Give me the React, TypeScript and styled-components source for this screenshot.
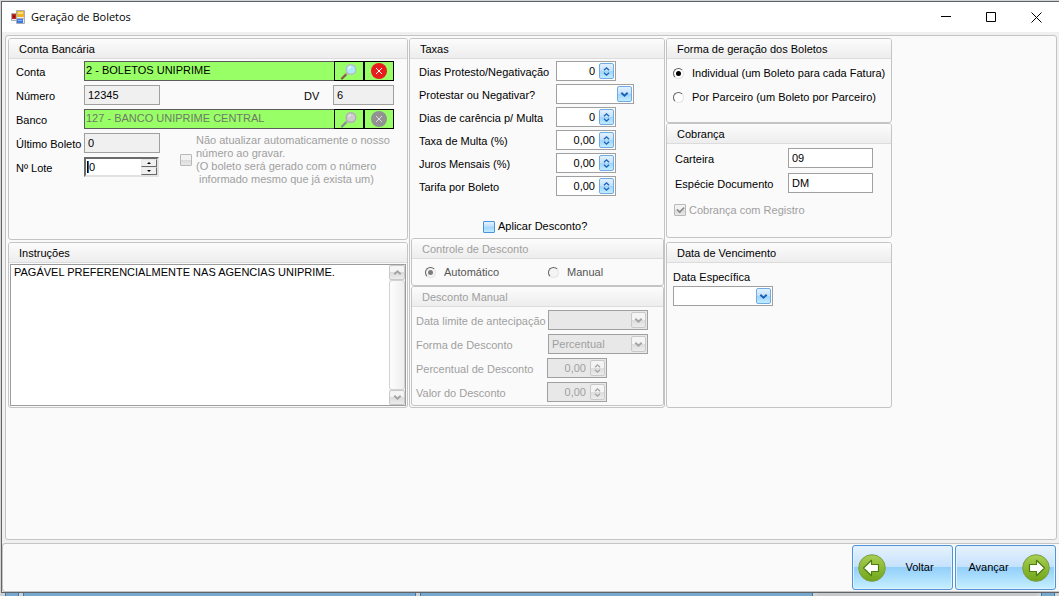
import React, { useId } from 'react';
import styled, { createGlobalStyle, css } from 'styled-components';

const line = '#c4c4c4';
const ink = '#000';
const faded = '#a0a0a0';
const green = '#99ff66';

const GlobalStyle = createGlobalStyle`
  * { box-sizing: border-box; }
  body {
    margin: 0;
    background: #d4d4d4;
    color: ${ink};
    font: 11px/13px "Liberation Sans", Arial, sans-serif;
  }
  button, input, select, textarea { font: inherit; color: inherit; margin: 0; }
`;

/* ---------- window frame ---------- */

const Desktop = styled.div`
  display: flex;
  flex-direction: column;
  min-height: 100vh;
  padding: 1px 0 0 1px;
`;

const Window = styled.div`
  flex: 1;
  display: flex;
  flex-direction: column;
  background: #f0f0f0;
  border: solid #5f6468;
  border-width: 1px 0 1px 1px;
`;

const TitleBar = styled.header`
  display: flex;
  align-items: center;
  height: 30px;
  padding-left: 9px;
  background: #fff;
`;

const Title = styled.h1`
  flex: 1;
  margin: 0 0 0 6px;
  font: 11px/16px "Open Sans", sans-serif;
`;

const CaptionButton = styled.button`
  display: grid;
  place-items: center;
  width: 45px;
  height: 28px;
  padding: 0;
  border: 0;
  background: none;
`;

const Panel = styled.main`
  flex: 1;
  margin: 3px 2px 3px 3px;
  padding: 2px;
  border: 1px solid ${line};
  border-radius: 3px;
  background: #fafafa;
`;

const Footer = styled.footer`
  display: flex;
  justify-content: flex-end;
  gap: 2px;
  padding: 1px 3px;
  border: 1px solid ${line};
  border-right: 0;
  border-radius: 3px 0 0 3px;
  background: #fafafa;
`;

const TaskStrip = styled.div`
  display: flex;
  gap: 4px;
  height: 3px;
  padding-left: 4px;
  background: #d0d0d0;
`;

const StripPart = styled.span<{ $width: number; $empty?: boolean }>`
  flex: 0 0 ${p => p.$width}px;
  background: ${p => (p.$empty ? '#c8c8c8' : '#78a9cc')};
  border: solid #3d78b0;
  border-width: ${p => (p.$empty ? '0' : '0 1px')};
`;

/* ---------- groups ---------- */

const Board = styled.div`
  display: grid;
  grid-template-columns: 400px 256px 226px;
  grid-template-rows: minmax(202px, auto) minmax(166px, auto);
  gap: 2px 1px;
`;

const Group = styled.section<{ $tall?: boolean; $faded?: boolean }>`
  display: flex;
  flex-direction: column;
  min-width: 0;
  border: 1px solid ${line};
  border-radius: 3px;
  color: ${p => (p.$faded ? faded : ink)};
  ${p => p.$tall && css`grid-row: span 2;`}
`;

const GroupTitle = styled.h2`
  flex: none;
  height: 20px;
  margin: 0;
  padding: 0 10px;
  border-bottom: 1px solid #dcdcdc;
  border-radius: 2px 2px 0 0;
  background: linear-gradient(#fcfcfc, #ededed);
  font: inherit;
  line-height: 20px;
`;

const Stack = styled.div`
  display: flex;
  flex-direction: column;
`;

const Rows = styled.div<{ $gap: number; $pad?: string }>`
  display: flex;
  flex-direction: column;
  gap: ${p => p.$gap}px;
  padding: ${p => p.$pad ?? '0'};
`;

const Row = styled.div`
  display: flex;
  align-items: center;
  height: 20px;
`;

const DigitRow = styled(Row)`
  margin-left: 144px;
`;

const Label = styled.label<{ $width: number }>`
  flex: 0 0 ${p => p.$width}px;
  padding-top: 2px;
  white-space: nowrap;
`;

/* ---------- fields ---------- */

const fieldBox = css`
  height: 20px;
  border: 1px solid #a0a0a0;
  border-radius: 0;
  background: #fff;
  outline: 0;
`;

const TextField = styled.input<{ $width: number }>`
  ${fieldBox}
  width: ${p => p.$width}px;
  padding: 0 3px;
  &:read-only { background: #f0f0f0; }
`;

const LookupBox = styled.div`
  display: flex;
  width: 310px;
  height: 20px;
`;

const LookupText = styled.input`
  flex: 1;
  min-width: 0;
  padding: 0 1px 2px;
  border: 1px solid #5c5c5c;
  border-right: 0;
  border-radius: 0;
  background: ${green};
  &:disabled { color: #6d7a68; }
`;

const LookupButton = styled.button`
  display: grid;
  place-items: center;
  width: 30px;
  padding: 0;
  border: 1px solid #000;
  background: ${green};
`;

const SpinBox = styled.div<{ $faded?: boolean }>`
  ${fieldBox}
  display: flex;
  width: 60px;
  padding: 1px;
  background: ${p => (p.$faded ? '#e8e8e8' : '#fff')};
`;

const SpinInput = styled.input`
  flex: 1;
  min-width: 0;
  padding: 0 4px 0 0;
  border: 0;
  background: none;
  text-align: right;
  outline: 0;
  &:disabled { color: ${faded}; }
`;

const buttonSkin = css<{ $faded?: boolean }>`
  display: grid;
  place-items: center;
  width: 15px;
  padding: 0;
  border: 1px solid ${p => (p.$faded ? '#c9c9c9' : '#6fabe4')};
  border-radius: 2px;
  background: ${p =>
    p.$faded
      ? 'linear-gradient(#f4f4f4 0 50%, #dcdcdc 50%, #ececec)'
      : 'linear-gradient(#e3f1fe, #c3e0fb 50%, #9ed3fb 50%, #c2ebff)'};
  color: ${p => (p.$faded ? '#a4a4a4' : '#1a62b8')};
`;

const StepButton = styled.button<{ $faded?: boolean }>`${buttonSkin}`;

const ComboBox = styled.div<{ $width: number }>`
  position: relative;
  display: flex;
  width: ${p => p.$width}px;
  height: 20px;
`;

const ComboSelect = styled.select`
  ${fieldBox}
  width: 100%;
  padding: 0 18px 0 3px;
  appearance: none;
  &:disabled { background: #e8e8e8; color: ${faded}; opacity: 1; }
`;

const ComboArrow = styled.span<{ $faded?: boolean }>`
  ${buttonSkin}
  position: absolute;
  inset: 2px 2px 2px auto;
  pointer-events: none;
`;

const LotBox = styled.div`
  display: flex;
  width: 75px;
  height: 20px;
  border: 2px solid;
  border-color: #6b6b6b #e2e2e2 #e2e2e2 #6b6b6b;
  background: #fff;
`;

const Caret = styled.span`
  width: 2px;
  margin: 2px 0 2px 1px;
  border-left: 1px solid #000;
  background: #1464c8;
`;

const LotInput = styled.input`
  flex: 1;
  min-width: 0;
  padding: 0;
  border: 0;
  outline: 0;
`;

const LotSteps = styled.div`
  display: grid;
  grid-template-rows: 1fr 1fr;
  width: 16px;
`;

const LotStep = styled.button`
  display: grid;
  place-items: center;
  padding: 0;
  border: 1px solid;
  border-color: #e8e8e8 #696969 #696969 #e8e8e8;
  background: #f0f0f0;
`;

/* ---------- ticks and radios ---------- */

const Choice = styled.label<{ $gap: number; $faded?: boolean }>`
  display: flex;
  align-items: center;
  gap: ${p => p.$gap}px;
  color: ${p => (p.$faded ? faded : 'inherit')};
  white-space: pre;
`;

const Tick = styled.input.attrs({ type: 'checkbox' })`
  flex: none;
  appearance: none;
  display: grid;
  place-items: center;
  width: 12px;
  height: 12px;
  border: 1px solid #4a94dc;
  border-radius: 1px;
  background: linear-gradient(#e4f2fe, #b8dcfb 50%, #9fd4fb 50%, #c4ecff);
  &:disabled {
    border-color: #b8b8b8;
    background: linear-gradient(#f2f2f2 0 50%, #dadada 50%, #e8e8e8);
  }
  &:checked::after {
    content: '';
    width: 7px;
    height: 4px;
    margin-bottom: 2px;
    border: solid #8c8c8c;
    border-width: 0 0 2px 2px;
    transform: rotate(-45deg) scale(0.8);
  }
`;

const Radio = styled.input.attrs({ type: 'radio' })`
  flex: none;
  appearance: none;
  display: grid;
  place-items: center;
  width: 11px;
  height: 11px;
  border: 1px solid;
  border-color: #606060 #e4e4e4 #e4e4e4 #606060;
  border-radius: 50%;
  background: #fff;
  &:checked::after {
    content: '';
    width: 5px;
    height: 5px;
    border-radius: 50%;
    background: #000;
  }
  &:disabled { background: #f4f4f4; }
  &:disabled::after { background: #7d7d7d; }
`;

const LotLine = styled.div`
  display: flex;
  gap: 20px;
  height: 54px;
`;

const RadioLine = styled.div`
  display: grid;
  grid-template-columns: 123px 1fr;
  padding: 0 13px;
  height: 26px;
  color: #555;
`;

const Discount = styled.div`
  display: flex;
  flex: 1;
  flex-direction: column;
  padding: 24px 0 1px 1px;
`;

const DiscountToggle = styled.div`
  padding: 0 0 5px 72px;
`;

/* ---------- instructions ---------- */

const NoteBox = styled.div`
  display: flex;
  flex: 1;
  margin: 1px;
  border: 1px solid #9c9c9c;
  background: #fff;
`;

const NoteText = styled.textarea`
  flex: 1;
  padding: 1px 3px;
  border: 0;
  resize: none;
  outline: 0;
  background: none;
  overflow: hidden;
`;

const ScrollBar = styled.div`
  display: grid;
  grid-template-rows: 15px 1fr 15px;
  width: 16px;
  background: #f2f2f2;
`;

const ScrollThumb = styled.div`
  border: 1px solid #d2d2d2;
  border-radius: 3px;
  background: linear-gradient(90deg, #fdfdfd, #efefef);
`;

const ScrollButton = styled.button<{ $faded?: boolean }>`
  ${buttonSkin}
  width: 16px;
`;

/* ---------- wizard buttons ---------- */

const WizardButton = styled.button`
  display: flex;
  align-items: center;
  gap: 6px;
  width: 101px;
  height: 45px;
  padding: 0 5px;
  border: 1px solid #4f93d8;
  border-radius: 3px;
  box-shadow: inset 0 0 0 1px #e0f0fe;
  background: linear-gradient(#e6f2fe, #c4e1fc 50%, #92cffa 50%, #c6efff);
`;

const WizardText = styled.span`
  flex: 1;
  text-align: center;
`;

/* ---------- drawings ---------- */

const AppIcon = () => (
  <svg width="14" height="14" viewBox="0 0 14 14" aria-hidden="true">
    <path d="M.5 3.500h5v7h-5zM5.500.5h8v8h-8zM5.500 8.500h8v5h-8z" fill="#e9e9ee" stroke="#a9acb6" />
    <path d="M1 4h4v5H1z" fill="#c5281c" />
    <path d="M2 5.500h2v2H2z" fill="#7c0f0a" />
    <path d="M6 1h7v6H6z" fill="#f0b429" />
    <path d="M7 2h5v2H7z" fill="#ffe07a" />
    <path d="M6 9h6v4H6z" fill="#3c78e0" />
    <path d="M7 10h4v1H7z" fill="#86b4ff" />
  </svg>
);

const Magnifier = ({ gray }: { gray?: boolean }) => (
  <svg width="18" height="17" viewBox="0 0 18 17" aria-hidden="true">
    <path d="M2 15.500l4-4" stroke={gray ? '#8c8c8c' : '#8a5a52'} strokeWidth="2.400" strokeLinecap="round" />
    <path d="M6 11.500l2-2" stroke={gray ? '#a8a8a8' : '#b9a58c'} strokeWidth="1.800" />
    <circle cx="11" cy="6.500" r="4.800" fill={gray ? '#cdcdcd' : '#aeeafc'} stroke={gray ? '#b0b0b0' : '#b4bfc6'} strokeWidth="1.500" />
    <path d="M8.500 6a3 3 0 0 1 2.500-2.500" fill="none" stroke={gray ? '#e4e4e4' : '#effcff'} strokeWidth="1.500" />
  </svg>
);

const ClearMark = ({ gray }: { gray?: boolean }) => (
  <svg width="16" height="16" viewBox="0 0 16 16" aria-hidden="true">
    <circle cx="8" cy="8" r="8" fill={gray ? '#929292' : '#e81c1c'} />
    <path d="M5 5l6 6M11 5l-6 6" stroke={gray ? '#dcdcdc' : '#fff'} strokeWidth="1" />
  </svg>
);

const UpDown = () => (
  <svg width="9" height="11" viewBox="0 0 9 11" fill="none" stroke="currentColor" strokeWidth="1.300" aria-hidden="true">
    <path d="M2 4.300l2.500-2.500L7 4.300M2 6.700l2.500 2.500L7 6.700" />
  </svg>
);

const Chevron = ({ up }: { up?: boolean }) => (
  <svg width="9" height="7" viewBox="0 0 9 7" fill="none" stroke="currentColor" strokeWidth="2" aria-hidden="true">
    <path d={up ? 'M1.300 5.300l3.200-3 3.200 3' : 'M1.300 1.700l3.200 3 3.200-3'} />
  </svg>
);

const SmallArrow = ({ up }: { up?: boolean }) => (
  <svg width="4" height="2" viewBox="0 0 4 2" aria-hidden="true">
    <path d={up ? 'M0 2L2 0l2 2z' : 'M0 0l2 2 2-2z'} />
  </svg>
);

const ArrowBadge = ({ right }: { right?: boolean }) => {
  const id = useId();
  return (
    <svg width="28" height="28" viewBox="0 0 28 28" aria-hidden="true">
      <defs>
        <linearGradient id={id} x1="0" y1="0" x2="0" y2="1">
          <stop offset="0" stopColor="#a9cf52" />
          <stop offset="1" stopColor="#6fa519" />
        </linearGradient>
      </defs>
      <circle cx="14" cy="14" r="13.300" fill={`url(#${id})`} stroke="#7f9c46" strokeWidth="1" />
      <path
        d={right
          ? 'M22.500 14L14.500 6.300v4.200H7.500v7h7v4.200z'
          : 'M5.500 14l8-7.700v4.200h7v7h-7v4.200z'}
        fill="#fff"
        stroke="#4d7c10"
        strokeWidth="1.200"
        strokeLinejoin="round"
      />
    </svg>
  );
};

/* ---------- composed controls ---------- */

const Lookup = ({ id, value, disabled }: { id: string; value: string; disabled?: boolean }) => (
  <LookupBox>
    <LookupText id={id} defaultValue={value} disabled={disabled} />
    <LookupButton type="button" aria-label="Pesquisar" disabled={disabled}><Magnifier gray={disabled} /></LookupButton>
    <LookupButton type="button" aria-label="Limpar" disabled={disabled}><ClearMark gray={disabled} /></LookupButton>
  </LookupBox>
);

const Spin = ({ label, width, value, disabled }: { label: string; width: number; value: string; disabled?: boolean }) => {
  const id = useId();
  return (
    <Row>
      <Label htmlFor={id} $width={width}>{label}</Label>
      <SpinBox $faded={disabled}>
        <SpinInput id={id} defaultValue={value} disabled={disabled} />
        <StepButton type="button" aria-label="Ajustar" disabled={disabled} $faded={disabled}><UpDown /></StepButton>
      </SpinBox>
    </Row>
  );
};

const Combo = ({ id, width, value = '', disabled }: { id: string; width: number; value?: string; disabled?: boolean }) => (
  <ComboBox $width={width}>
    <ComboSelect id={id} defaultValue={value} disabled={disabled}><option>{value}</option></ComboSelect>
    <ComboArrow $faded={disabled}><Chevron /></ComboArrow>
  </ComboBox>
);

export default function App() {
  return (
    <Desktop>
      <GlobalStyle />
      <Window>
        <TitleBar>
          <AppIcon />
          <Title>Geração de Boletos</Title>
          <CaptionButton type="button" aria-label="Minimizar">
            <svg width="11" height="11"><path d="M0 4.500h10" stroke="#000" /></svg>
          </CaptionButton>
          <CaptionButton type="button" aria-label="Maximizar">
            <svg width="11" height="11"><path d="M.5.5h9v9h-9z" fill="none" stroke="#000" /></svg>
          </CaptionButton>
          <CaptionButton type="button" aria-label="Fechar">
            <svg width="11" height="11"><path d="M.5.5l10 10M10.500.5l-10 10" stroke="#000" /></svg>
          </CaptionButton>
        </TitleBar>

        <Panel>
          <Board>
            <Group>
              <GroupTitle>Conta Bancária</GroupTitle>
              <Rows $gap={4} $pad="2px 7px">
                <Row>
                  <Label htmlFor="conta" $width={68}>Conta</Label>
                  <Lookup id="conta" value="2 - BOLETOS UNIPRIME" />
                </Row>
                <Row>
                  <Label htmlFor="numero" $width={68}>Número</Label>
                  <TextField id="numero" $width={76} defaultValue="12345" readOnly />
                  <DigitRow>
                    <Label htmlFor="dv" $width={29}>DV</Label>
                    <TextField id="dv" $width={61} defaultValue="6" readOnly />
                  </DigitRow>
                </Row>
                <Row>
                  <Label htmlFor="banco" $width={68}>Banco</Label>
                  <Lookup id="banco" value="127 - BANCO UNIPRIME CENTRAL" disabled />
                </Row>
                <LotLine>
                  <Rows $gap={4}>
                    <Row>
                      <Label htmlFor="ultimo" $width={68}>Último Boleto</Label>
                      <TextField id="ultimo" $width={76} defaultValue="0" readOnly />
                    </Row>
                    <Row>
                      <Label htmlFor="lote" $width={68}>Nº Lote</Label>
                      <LotBox>
                        <Caret />
                        <LotInput id="lote" defaultValue="0" />
                        <LotSteps>
                          <LotStep type="button" aria-label="Aumentar"><SmallArrow up /></LotStep>
                          <LotStep type="button" aria-label="Diminuir"><SmallArrow /></LotStep>
                        </LotSteps>
                      </LotBox>
                    </Row>
                  </Rows>
                  <Choice $gap={4} $faded>
                    <Tick disabled />
                    <span>{'Não atualizar automaticamente o nosso\nnúmero ao gravar.\n(O boleto será gerado com o número\n informado mesmo que já exista um)'}</span>
                  </Choice>
                </LotLine>
              </Rows>
            </Group>

            <Group $tall>
              <GroupTitle>Taxas</GroupTitle>
              <Rows $gap={3} $pad="2px 9px 0">
                <Spin label="Dias Protesto/Negativação" width={137} value="0" />
                <Row>
                  <Label htmlFor="protestar" $width={137}>Protestar ou Negativar?</Label>
                  <Combo id="protestar" width={78} />
                </Row>
                <Spin label="Dias de carência p/ Multa" width={137} value="0" />
                <Spin label="Taxa de Multa (%)" width={137} value="0,00" />
                <Spin label="Juros Mensais (%)" width={137} value="0,00" />
                <Spin label="Tarifa por Boleto" width={137} value="0,00" />
              </Rows>
              <Discount>
                <DiscountToggle>
                  <Choice $gap={3}><Tick />Aplicar Desconto?</Choice>
                </DiscountToggle>
                <Group $faded>
                  <GroupTitle>Controle de Desconto</GroupTitle>
                  <RadioLine>
                    <Choice $gap={8}><Radio name="desconto" disabled defaultChecked />Automático</Choice>
                    <Choice $gap={8}><Radio name="desconto" disabled />Manual</Choice>
                  </RadioLine>
                </Group>
                <Group $faded>
                  <GroupTitle>Desconto Manual</GroupTitle>
                  <Rows $gap={4} $pad="3px 4px">
                    <Row>
                      <Label htmlFor="limite" $width={132}>Data limite de antecipação</Label>
                      <Combo id="limite" width={100} disabled />
                    </Row>
                    <Row>
                      <Label htmlFor="forma" $width={132}>Forma de Desconto</Label>
                      <Combo id="forma" width={100} value="Percentual" disabled />
                    </Row>
                    <Spin label="Percentual de Desconto" width={131} value="0,00" disabled />
                    <Spin label="Valor do Desconto" width={131} value="0,00" disabled />
                  </Rows>
                </Group>
              </Discount>
            </Group>

            <Stack>
              <Group>
                <GroupTitle>Forma de geração dos Boletos</GroupTitle>
                <Rows $gap={4} $pad="4px 6px 15px">
                  <Row><Choice $gap={8}><Radio name="geracao" defaultChecked />Individual (um Boleto para cada Fatura)</Choice></Row>
                  <Row><Choice $gap={8}><Radio name="geracao" />Por Parceiro (um Boleto por Parceiro)</Choice></Row>
                </Rows>
              </Group>
              <Group>
                <GroupTitle>Cobrança</GroupTitle>
                <Rows $gap={5} $pad="4px 8px 7px">
                  <Row>
                    <Label htmlFor="carteira" $width={113}>Carteira</Label>
                    <TextField id="carteira" $width={85} defaultValue="09" />
                  </Row>
                  <Row>
                    <Label htmlFor="especie" $width={113}>Espécie Documento</Label>
                    <TextField id="especie" $width={85} defaultValue="DM" />
                  </Row>
                </Rows>
                <Rows $gap={0} $pad="0 7px 17px">
                  <Row><Choice $gap={3} $faded><Tick disabled defaultChecked />Cobrança com Registro</Choice></Row>
                </Rows>
              </Group>
            </Stack>

            <Group>
              <GroupTitle>Instruções</GroupTitle>
              <NoteBox>
                <NoteText aria-label="Instruções" defaultValue="PAGÁVEL PREFERENCIALMENTE NAS AGENCIAS UNIPRIME." />
                <ScrollBar>
                  <ScrollButton type="button" aria-label="Rolar para cima" $faded><Chevron up /></ScrollButton>
                  <ScrollThumb />
                  <ScrollButton type="button" aria-label="Rolar para baixo" $faded><Chevron /></ScrollButton>
                </ScrollBar>
              </NoteBox>
            </Group>

            <Group>
              <GroupTitle>Data de Vencimento</GroupTitle>
              <Rows $gap={0} $pad="3px 6px">
                <Row><Label htmlFor="data" $width={100}>Data Específica</Label></Row>
                <Combo id="data" width={100} />
              </Rows>
            </Group>
          </Board>
        </Panel>

        <Footer>
          <WizardButton type="button"><ArrowBadge /><WizardText>Voltar</WizardText></WizardButton>
          <WizardButton type="button"><WizardText>Avançar</WizardText><ArrowBadge right /></WizardButton>
        </Footer>
      </Window>
      <TaskStrip>
        <StripPart $width={14} />
        <StripPart $width={393} />
        <StripPart $width={393} />
        <StripPart $width={220} $empty />
        <StripPart $width={14} />
      </TaskStrip>
    </Desktop>
  );
}
